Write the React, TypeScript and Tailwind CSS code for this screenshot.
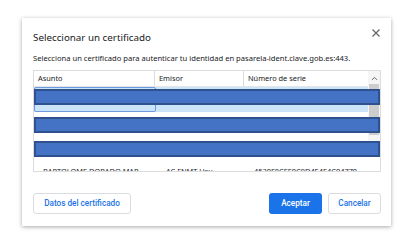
import { ChevronUp, ChevronDown } from "lucide-react";

const Bar = ({ top }: { top: string }) => (
  <div className={`absolute left-0 right-0 h-[16px] border-2 border-[#2f528f] bg-[#4472c4] ${top}`} />
);

export default function App() {
  return (
    <div className="w-[410px] h-[247px] bg-white pl-[22px] pt-[18px] font-['Noto_Sans',sans-serif] text-[#202124]">
      <div className="relative w-[369px] h-[208px] bg-white shadow-[0_1px_4px_rgba(0,0,0,0.35)] pl-[11px] pr-[10px] pt-[12px] pb-[12px] flex flex-col">
        <button className="absolute right-[7px] top-[7px] w-[16px] h-[16px] flex items-center justify-center text-[#5f6368]">
          <svg width="8" height="8" viewBox="0 0 8 8">
            <path d="M0.5 0.5 L7.5 7.5 M7.5 0.5 L0.5 7.5" stroke="currentColor" strokeWidth="1.2" />
          </svg>
        </button>

        <div className="text-[9.8px] leading-[14px] mt-[1px]">Seleccionar un certificado</div>
        <div className="text-[7.6px] leading-[12px] mt-[7px]">
          Selecciona un certificado para autenticar tu identidad en pasarela-ident.clave.gob.es:443.
        </div>

        <div className="relative mt-[6px] w-[348px] h-[102px] border border-[#dcdcdc] overflow-hidden text-[7.4px]">
          <div className="flex h-[16px] items-center border-b border-[#e6e6e6]">
            <div className="w-[121px] h-full flex items-center pl-[4px] border-r border-[#dcdcdc]">Asunto</div>
            <div className="w-[89px] h-full flex items-center pl-[4px] border-r border-[#dcdcdc]">Emisor</div>
            <div className="flex-1 h-full flex items-center pl-[4px]">Número de serie</div>
            <div className="w-[12px]" />
          </div>

          <div className="flex">
            <div className="flex-1 flex flex-col">
              <div className="h-[25px] bg-[#cce4f7] flex">
                <div className="w-[122px] h-full border border-[#6c9ae0] rounded-[2px]" />
              </div>
              <div className="h-[24px]" />
              <div className="h-[24px]" />
              <div className="h-[24px] flex items-center whitespace-nowrap">
                <div className="w-[122px] pl-[9px] overflow-hidden text-ellipsis">BARTOLOME DORADO MAR...</div>
                <div className="w-[89px] pl-[10px] overflow-hidden text-ellipsis">AC FNMT Usu...</div>
                <div className="flex-1 pl-[9px] overflow-hidden">4530F8CEE0C9D4E4E4C04770</div>
              </div>
            </div>
            <div className="w-[12px] h-[86px] -mt-[16px] flex flex-col items-center bg-[#f5f5f5]">
              <ChevronUp size={9} strokeWidth={2.5} className="text-[#606060] mt-[3px]" />
              <div className="w-[10px] h-[51px] bg-[#cdcdcd] mt-[1px]" />
              <div className="flex-1" />
              <ChevronDown size={9} strokeWidth={2.5} className="text-[#606060] mb-[2px]" />
            </div>
          </div>

          <Bar top="top-[18px]" />
          <Bar top="top-[46px]" />
          <Bar top="top-[70px]" />
        </div>

        <div className="flex-1" />
        <div className="flex items-center font-['Roboto',sans-serif] text-[8.2px] font-medium">
          <button className="h-[21px] w-[98px] border border-[#dadce0] rounded-[3px] text-[#1a73e8] bg-white">
            Datos del certificado
          </button>
          <div className="flex-1" />
          <button className="h-[21px] w-[53px] rounded-[3px] bg-[#1a73e8] text-white">Aceptar</button>
          <button className="h-[21px] w-[53px] ml-[6px] border border-[#dadce0] rounded-[3px] text-[#1a73e8] bg-white">
            Cancelar
          </button>
        </div>
      </div>
    </div>
  );
}
